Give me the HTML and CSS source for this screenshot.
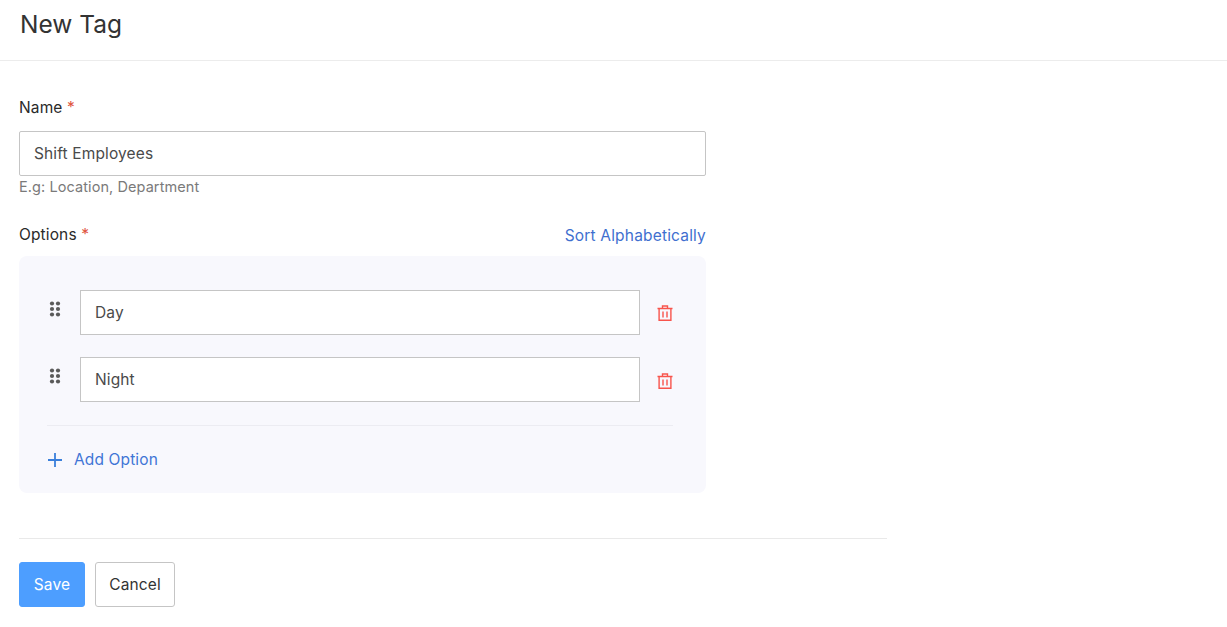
FILE: index.html
```html
<!DOCTYPE html>
<html lang="en">
<head>
<meta charset="utf-8">
<title>New Tag</title>
<link rel="stylesheet" href="styles.css">
</head>
<body>
<header class="page-header"><h1 class="title">New Tag</h1></header>
<main class="content">
  <form class="form">
    <div class="field field-name">
      <label class="label">Name <span class="req">*</span></label>
      <input class="input" type="text" value="Shift Employees">
      <div class="help">E.g: Location, Department</div>
    </div>
    <div class="options-head">
      <label class="label">Options <span class="req">*</span></label>
      <a class="link sort-link" href="#">Sort Alphabetically</a>
    </div>
    <div class="panel">
      <div class="row">
        <svg class="grip" width="12" height="16" viewBox="0 0 12 16"><g fill="#5a5a5a"><circle cx="3" cy="2.5" r="2.1"/><circle cx="9" cy="2.5" r="2.1"/><circle cx="3" cy="8" r="2.1"/><circle cx="9" cy="8" r="2.1"/><circle cx="3" cy="13.5" r="2.1"/><circle cx="9" cy="13.5" r="2.1"/></g></svg>
        <input class="input option" type="text" value="Day">
        <svg class="trash" width="16" height="16" viewBox="0 0 16 16" fill="none" stroke="#f8544c" stroke-width="1.4"><path d="M.5 3.5h15M2.1 3.5v11.8h11.8V3.5M5.5 3.5V1h5v2.5M6 6.5v6M10 6.5v6"/></svg>
      </div>
      <div class="row">
        <svg class="grip" width="12" height="16" viewBox="0 0 12 16"><g fill="#5a5a5a"><circle cx="3" cy="2.5" r="2.1"/><circle cx="9" cy="2.5" r="2.1"/><circle cx="3" cy="8" r="2.1"/><circle cx="9" cy="8" r="2.1"/><circle cx="3" cy="13.5" r="2.1"/><circle cx="9" cy="13.5" r="2.1"/></g></svg>
        <input class="input option" type="text" value="Night">
        <svg class="trash trash-low" width="16" height="16" viewBox="0 0 16 16" fill="none" stroke="#f8544c" stroke-width="1.4"><path d="M.5 3.5h15M2.1 3.5v11.8h11.8V3.5M5.5 3.5V1h5v2.5M6 6.5v6M10 6.5v6"/></svg>
      </div>
      <div class="add-row">
        <svg width="14" height="14" viewBox="0 0 14 14" stroke="#3a7fdb" stroke-width="1.8"><path d="M7 0v14M0 7h14"/></svg>
        <a class="link add-link" href="#">Add Option</a>
      </div>
    </div>
    <div class="actions">
      <button class="btn btn-primary" type="button">Save</button>
      <button class="btn btn-default" type="button">Cancel</button>
    </div>
  </form>
</main>
</body>
</html>
```

FILE: styles.css
```css
* { box-sizing: border-box; }
html, body { margin: 0; padding: 0; background: #fff; }
body { font-family: Inter, "Liberation Sans", sans-serif; font-size: 15.5px; letter-spacing: 0.13px; color: #333; overflow: hidden; }
.page-header { height: 61px; border-bottom: 1px solid #ececec; padding: 7px 20px 0; }
.title { margin: 0; font-size: 24.5px; line-height: 35px; font-weight: 400; color: #333; letter-spacing: 0; }
.content { padding: 0 0 0 19px; }
.form { width: 868px; }
.field-name { padding-top: 37px; width: 687px; }
.label { display: block; font-size: 15.5px; line-height: 20px; color: #2a2a2a; }
.req { color: #e0533d; }
.input { display: block; width: 100%; height: 45px; border: 1px solid #c5c5c5; border-radius: 2px; background: #fff; padding: 0 14px; font: 400 15.5px Inter, "Liberation Sans", sans-serif; letter-spacing: 0.13px; color: #4a4a4a; outline: none; }
.field-name .label { margin-bottom: 13px; }
.help { font-size: 14.5px; line-height: 20px; color: #7a7a7a; letter-spacing: 0.08px; margin-top: 1px; }
.options-head { width: 687px; display: flex; justify-content: space-between; align-items: center; margin-top: 27px; height: 22px; }
.link { color: #3f6fcf; text-decoration: none; font-size: 15.5px; line-height: 20px; }
.sort-link { margin-top: 2px; letter-spacing: 0.18px; }
.panel { width: 687px; height: 237px; margin-top: 10px; background: #f8f8fd; border-radius: 8px; padding: 34px 33px 0 28px; }
.row { display: flex; align-items: flex-start; height: 45px; margin-bottom: 22px; }
.grip { margin: 11px 0 0 2px; flex: none; }
.option { width: 560px; flex: none; margin-left: 19px; border-radius: 0; }
.trash { margin: 15px 0 0 17px; flex: none; }
.trash-low { margin-top: 16px; }
.add-row { display: flex; align-items: center; gap: 12px; margin-top: 23px; border-top: 1px solid #ececf2; padding: 21px 0 0 1px; height: 47px; }
.add-link { color: #3f75d6; }
.actions { margin-top: 45px; padding-top: 23px; border-top: 1px solid #e9e9e9; display: flex; gap: 10px; }
.btn { height: 45px; border-radius: 3px; font: 400 15.5px Inter, "Liberation Sans", sans-serif; letter-spacing: 0.13px; padding: 0; cursor: pointer; }
.btn-primary { width: 66px; background: #4d9eff; border: 1px solid #4d9eff; color: #fff; }
.btn-default { width: 80px; background: #fff; border: 1px solid #c5c5c5; color: #333; }
```
